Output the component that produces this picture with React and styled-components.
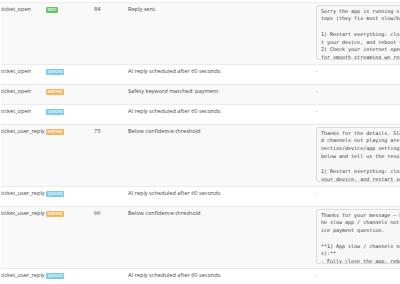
import React from 'react';
import styled, { createGlobalStyle } from 'styled-components';

const rows = [
  {
    trigger: 'ticket_open',
    status: 'sent',
    score: '84',
    reason: 'Reply sent.',
    reply:
      'Sorry the app is running slow. Try these 3 steps (they fix most slow/buffering issues):\n\n' +
      '1) Restart everything: close the app, restart your device, and reboot your router.\n' +
      '2) Check your internet speed at fast.com;\nfor smooth streaming we recommend 25+ Mbps.',
  },
  { trigger: 'ticket_open', status: 'queued', reason: 'AI reply scheduled after 60 seconds' },
  { trigger: 'ticket_open', status: 'skipped', reason: 'Safety keyword matched: payment' },
  { trigger: 'ticket_open', status: 'queued', reason: 'AI reply scheduled after 60 seconds' },
  {
    trigger: 'ticket_user_reply',
    status: 'skipped',
    score: '73',
    reason: 'Below confidence threshold',
    reply:
      'Thanks for the details. Slow app loading, and channels not playing are almost always connection/device/app settings. Try the 3 steps below and tell us the results:\n\n' +
      '1) Restart everything: close the app, unplug your device, and restart your router.',
  },
  { trigger: 'ticket_user_reply', status: 'queued', reason: 'AI reply scheduled after 60 seconds' },
  {
    trigger: 'ticket_user_reply',
    status: 'skipped',
    score: '66',
    reason: 'Below confidence threshold',
    reply:
      "Thanks for your message \u2014 here's help with the slow app / channels not playing, and service payment question.\n\n" +
      '**1) App slow / channels not loading (devices):**\n' +
      '- Fully close the app, reboot your device and router.',
  },
  { trigger: 'ticket_user_reply', status: 'queued', reason: 'AI reply scheduled after 60 seconds' },
];

const GlobalStyle = createGlobalStyle`
  html, body {
    margin: 0;
    background: #fff;
    overflow: hidden;
  }
  body {
    padding-top: 2px;
    font-family: "Open Sans", "Liberation Sans", sans-serif;
  }
`;

const Table = styled.div`
  width: 520px;
  padding-left: 1px;
`;

const Row = styled.div`
  display: grid;
  grid-template-columns: 45px 48px 34px 188px 1fr;
  min-height: 19px;
  border-top: 1px solid #ebebeb;
  background: ${(p) => (p.$striped ? '#f9f9f9' : '#fff')};
`;

const Cell = styled.div`
  padding-top: 1.5px;
  font-size: 5.6px;
  line-height: 8px;
  color: ${(p) => (p.$muted ? '#888' : '#444')};
  white-space: nowrap;
`;

const badgeColors = {
  sent: '#6dbf6a',
  queued: '#7ccbe8',
  skipped: '#f0b865',
};

const Badge = styled.span`
  display: inline-block;
  margin-top: 2.5px;
  padding: 0 1.4px;
  height: 6px;
  line-height: 6px;
  border-radius: 1px;
  font-size: 3.8px;
  font-weight: 600;
  text-transform: uppercase;
  color: #fff;
  background: ${(p) => badgeColors[p.$tone]};
  vertical-align: top;
`;

const Reply = styled.pre`
  margin: 0 0 4.5px;
  box-sizing: border-box;
  width: calc(44ch + 10px);
  height: 55px;
  overflow: hidden;
  padding: 2px 4px;
  border: 1px solid #dcdcdc;
  border-radius: 2px;
  background: #f7f7f7;
  font-family: "DejaVu Sans Mono", "Liberation Mono", monospace;
  font-size: 5px;
  line-height: 7.8px;
  color: #3a3a3a;
  white-space: pre-wrap;
  word-break: break-all;
`;

const ReplyCell = styled.div`
  padding-top: 1.5px;
`;

export default function App() {
  return (
    <>
      <GlobalStyle />
      <Table>
        {rows.map((r, i) => (
          <Row key={i} $striped={i % 2 === 0}>
            <Cell>{r.trigger}</Cell>
            <Cell>
              <Badge $tone={r.status}>{r.status}</Badge>
            </Cell>
            <Cell>{r.score || ''}</Cell>
            <Cell>{r.reason}</Cell>
            {r.reply ? (
              <ReplyCell>
                <Reply>{r.reply}</Reply>
              </ReplyCell>
            ) : (
              <Cell $muted>-</Cell>
            )}
          </Row>
        ))}
      </Table>
    </>
  );
}
